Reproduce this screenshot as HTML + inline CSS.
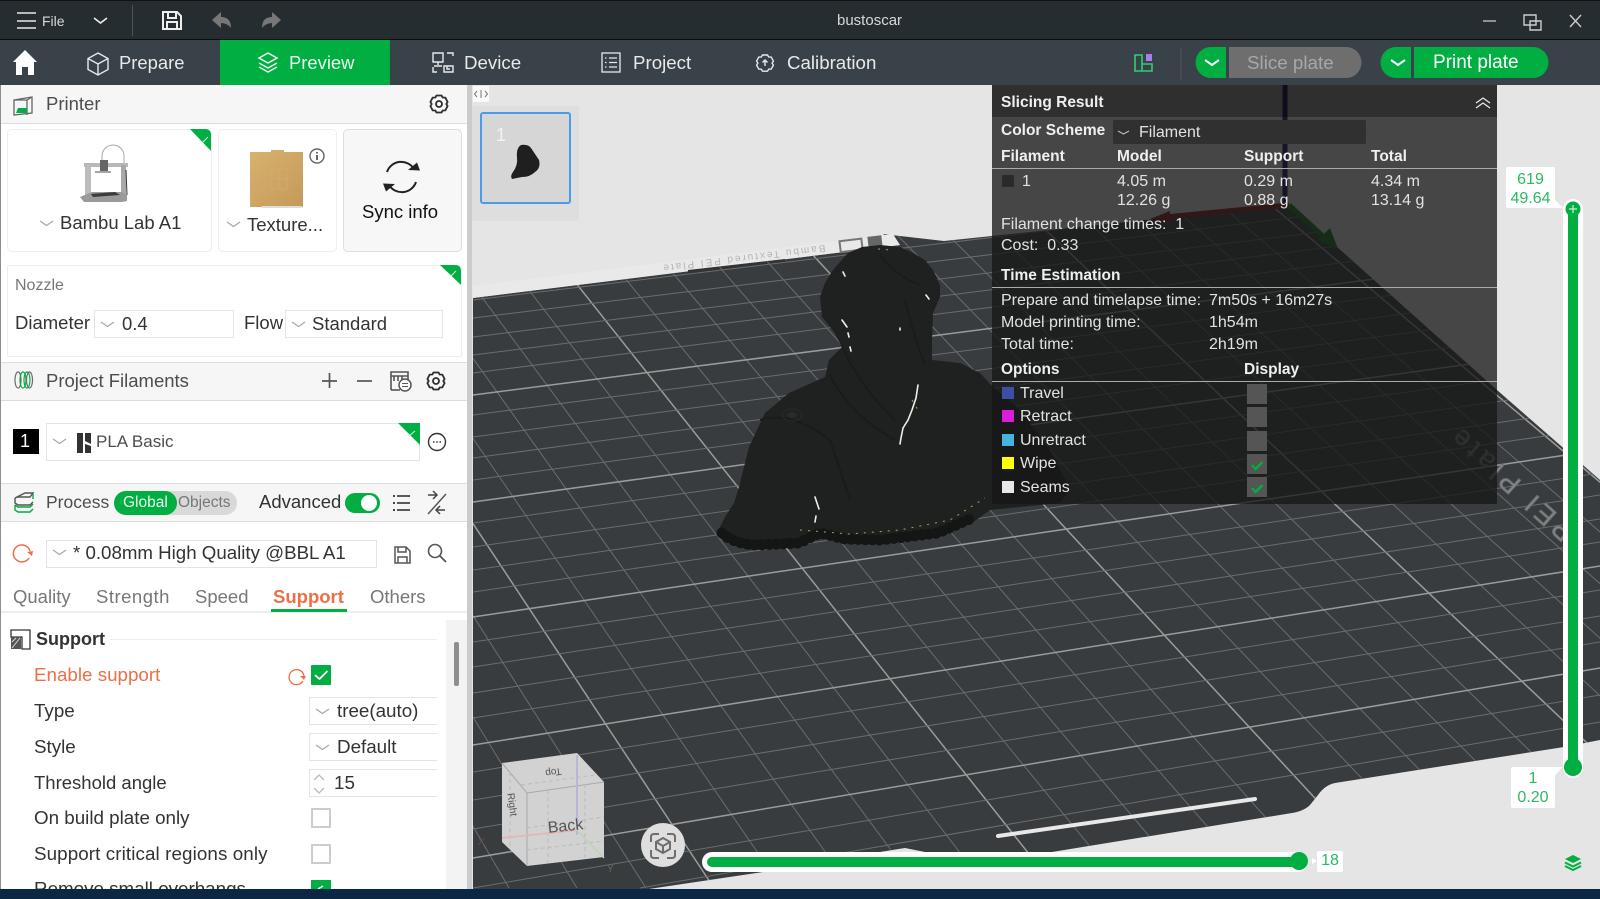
<!DOCTYPE html>
<html><head><meta charset="utf-8"><title>bustoscar</title>
<style>
html,body{margin:0;padding:0;width:1600px;height:899px;overflow:hidden;background:#e5e5e5;font-family:"Liberation Sans",sans-serif}
div{box-sizing:border-box}
.a{position:absolute}
.t{position:absolute;white-space:nowrap;line-height:22px;height:22px;margin-top:-11px}
.tab{color:#e8eaea;font-size:18.7px}
.l{color:#333;font-size:18.8px}
.g{color:#4d4d4d;font-size:18.5px}
.p{color:#e2e2e2;font-size:16px}
.b{color:#efefef;font-size:15.5px;font-weight:bold}
.sel{position:absolute;background:#fff;border:1px solid #e4e4e4}
.card{position:absolute;background:#fff;border:1px solid #eee;border-radius:5px}
.hd{position:absolute;left:1px;width:466px;background:#f6f6f6;border-top:1px solid #ddd;border-bottom:1px solid #ddd}
.sw{position:absolute;width:12px;height:12px;left:1002px}
.cb{position:absolute;left:1247px;width:20px;height:20px;background:#555}
.chk{position:absolute;left:311px;width:20px;height:20px;background:#fff;border:2px solid #ccc;border-radius:1px}
</style></head><body>

<!-- title and tab bars -->
<div class="a" style="left:0;top:0;width:1600px;height:40px;background:#262d30;border-top:1px solid #111;border-bottom:1px solid #0d0d0d"></div>
<div class="a" style="left:0;top:40px;width:1600px;height:45px;background:#384248"></div>
<div class="a" style="left:220px;top:40px;width:170px;height:45px;background:#00ae42"></div>

<!-- viewport -->
<svg class="a" style="left:0;top:0" width="1600" height="889" viewBox="0 0 1600 889">
<defs>
<clipPath id="pl"><path d="M473 298L900 245L883 234L944 241L1290 205L1383 288L1497 390L1600 480V740L1564 747L1335 783Q1325 785 1318 795L1310 805Q1304 811 1292 813L1052 852L930 853L905 848L880 852L763 872L649 889H473Z"/></clipPath>
</defs>
<rect x="472" y="85" width="1128" height="804" fill="#e5e5e5"/>
<path d="M473 298L900 245L883 234L944 241L1290 205L1383 288L1497 390L1600 480V740L1564 747L1335 783Q1325 785 1318 795L1310 805Q1304 811 1292 813L1052 852L930 853L905 848L880 852L763 872L649 889H473Z" fill="#393c3e"/>
<path d="M473 286L893 234L900 245L473 298Z" fill="#e9e9e9"/>
<path d="M688 270L785 259V263L688 274Z" fill="#333"/>
<text transform="translate(825,245) rotate(173)" font-size="10" fill="#b4b4b4" font-family="Liberation Sans,sans-serif" letter-spacing="2">Bambu Textured PEI Plate</text>
<rect x="840" y="240" width="22" height="11" fill="none" stroke="#777" stroke-width="2" transform="rotate(-7 850 245)"/>
<rect x="868" y="236" width="14" height="12" fill="#666" transform="rotate(-7 875 242)"/>
<g clip-path="url(#pl)" stroke="#6a6d6e" stroke-width="1">
<line x1="108" y1="200" x2="509" y2="888"/><line x1="158.5" y1="200" x2="577" y2="888"/><line x1="209" y1="200" x2="646" y2="888"/><line x1="259" y1="200" x2="714" y2="888" stroke="#9a9c9c" stroke-width="1.5"/><line x1="309" y1="200" x2="782" y2="888"/><line x1="360" y1="200" x2="851" y2="888"/><line x1="410" y1="200" x2="919" y2="888"/><line x1="460" y1="200" x2="987" y2="888"/><line x1="510" y1="200" x2="1056" y2="888" stroke="#9a9c9c" stroke-width="1.5"/><line x1="561" y1="200" x2="1124" y2="888"/><line x1="611" y1="200" x2="1193" y2="888"/><line x1="661" y1="200" x2="1261" y2="888"/><line x1="712" y1="200" x2="1329" y2="888"/><line x1="762" y1="200" x2="1398" y2="888" stroke="#9a9c9c" stroke-width="1.5"/><line x1="812" y1="200" x2="1466" y2="888"/><line x1="863" y1="200" x2="1535" y2="888"/><line x1="913" y1="200" x2="1603" y2="888"/><line x1="963" y1="200" x2="1671" y2="888"/><line x1="1014" y1="200" x2="1740" y2="888" stroke="#9a9c9c" stroke-width="1.5"/><line x1="1064" y1="200" x2="1808" y2="888"/><line x1="1114" y1="200" x2="1877" y2="888"/><line x1="1165" y1="200" x2="1945" y2="888"/><line x1="1215" y1="200" x2="2013" y2="888"/><line x1="1265" y1="200" x2="2082" y2="888" stroke="#9a9c9c" stroke-width="1.5"/>
<line x1="-244" y1="200" x2="30" y2="888"/><line x1="-194" y1="200" x2="98" y2="888"/><line x1="-143" y1="200" x2="167" y2="888"/><line x1="-93" y1="200" x2="235" y2="888"/><line x1="-43" y1="200" x2="303" y2="888"/><line x1="8" y1="200" x2="372" y2="888"/><line x1="58" y1="200" x2="440" y2="888"/>
<line x1="473" y1="300" x2="1600" y2="164"/><line x1="473" y1="318" x2="1600" y2="180"/><line x1="473" y1="337" x2="1600" y2="197"/><line x1="473" y1="355" x2="1600" y2="213"/><line x1="473" y1="373" x2="1600" y2="230"/><line x1="473" y1="395" x2="1600" y2="250" stroke="#9a9c9c" stroke-width="1.5"/><line x1="473" y1="415" x2="1600" y2="268"/><line x1="473" y1="437" x2="1600" y2="288"/><line x1="473" y1="458" x2="1600" y2="307"/><line x1="473" y1="480" x2="1600" y2="327"/><line x1="473" y1="502" x2="1600" y2="346" stroke="#9a9c9c" stroke-width="1.5"/><line x1="473" y1="523" x2="1600" y2="365"/><line x1="473" y1="547" x2="1600" y2="387"/><line x1="473" y1="570" x2="1600" y2="408"/><line x1="473" y1="592" x2="1600" y2="428"/><line x1="473" y1="617" x2="1600" y2="450" stroke="#9a9c9c" stroke-width="1.5"/><line x1="473" y1="642" x2="1600" y2="473"/><line x1="473" y1="667" x2="1600" y2="495"/><line x1="473" y1="693" x2="1600" y2="519"/><line x1="473" y1="718" x2="1600" y2="542"/><line x1="473" y1="745" x2="1600" y2="566" stroke="#9a9c9c" stroke-width="1.5"/><line x1="473" y1="772" x2="1600" y2="590"/><line x1="473" y1="800" x2="1600" y2="616"/><line x1="473" y1="829" x2="1600" y2="642"/><line x1="473" y1="858" x2="1600" y2="668" stroke="#9a9c9c" stroke-width="1.5"/><line x1="473" y1="888" x2="1600" y2="695"/><line x1="640" y1="888" x2="1600" y2="722"/>
<text transform="translate(1458,424) rotate(222)" font-size="27" fill="#85878a" font-family="Liberation Sans,sans-serif" text-anchor="end" letter-spacing="5">PEI Plate</text>
</g>
<path d="M998 836L1255 799" stroke="#e8e8e8" stroke-width="4" stroke-linecap="round"/>
<!-- axes -->
<path d="M1285 85V205" stroke="#12125e" stroke-width="5"/>
<path d="M1289 205L1165 217" stroke="#8c1a1a" stroke-width="5"/><path d="M1170 211L1150 219L1170 223Z" fill="#8c1a1a"/>
<path d="M1289 205L1325 238" stroke="#157a20" stroke-width="5"/><path d="M1318 240L1330 228L1338 249Z" fill="#157a20"/>
<!-- bust -->
<path d="M848 253L862 247L880 245L900 247L913 253L925 260L933 270L940 285L940 297L933 313L932 340L932 360L960 363L980 373L993 387L1020 410L1050 450L1070 490L1060 503L990 510L972 523L939 537L879 543L845 542L819 537L799 547L759 548L733 545L717 533L725 517L734 503L739 487L749 447L765 413L789 393L825 377L829 360L842 347L834 332L822 317L820 297L825 283L833 270Z" fill="#1f2020"/>
<path d="M722 533Q735 545 760 545L799 543L820 533L845 539L880 540L938 533L972 518" fill="none" stroke="#161717" stroke-width="8" stroke-linejoin="round"/>
<path d="M722 533Q735 545 760 545L799 543L820 533L845 539L880 540L938 533L972 518" fill="none" stroke="#141515" stroke-width="11" stroke-dasharray="0.1 7" stroke-linecap="round"/>
<path d="M842 345Q858 385 895 420M905 300Q915 340 925 365M880 255Q895 275 920 285M830 375Q850 415 895 440M760 420Q790 410 830 440L850 500" stroke="#1a1b1b" stroke-width="2" fill="none"/>
<ellipse cx="792" cy="415" rx="10" ry="6" fill="none" stroke="#292a2a"/><ellipse cx="792" cy="415" rx="5" ry="3" fill="#292a2a"/>
<g stroke="#eee" stroke-width="1.600" fill="none" stroke-linecap="round">
<path d="M842 320L847 327M848 333L849 337M850 347L851 351M843 272L845 276M926 295L929 299M900 328L900 330"/>
<path d="M918 385L916 398L912 410L908 420L903 428L901 438L900 444"/>
<path d="M815 497L819 509M816 516L815 522"/>
</g>
<g stroke="#a8a54a" stroke-width="1" stroke-dasharray="2 6" fill="none"><path d="M878 249L892 250"/><path d="M800 530L850 534L900 530L950 520L985 498"/><path d="M912 400L918 410"/></g>
<!-- thumbnails -->
<rect x="472" y="106" width="107" height="115" fill="#dedede" rx="2"/>
<rect x="481" y="113" width="89" height="90" fill="#d6d6d6" stroke="#4a9be8" stroke-width="2" rx="2"/>
<path d="M521 145Q528 144 531 148L539 160Q541 168 535 172Q530 177 522 177L512 179Q510 176 513 172Q518 165 517 158Q516 148 521 145Z" fill="#1f1f1f"/>
<rect x="473" y="86" width="16" height="16" fill="#fafafa"/>
<path d="M477 91l-2.500 3 2.500 3M485 91l2.500 3-2.500 3" stroke="#777" fill="none"/><path d="M481 90v8" stroke="#777"/>
<!-- nav cube -->
<path d="M502 763L577 753L604 782V857L527 866L502 842Z" fill="#d2d2d2"/>
<path d="M502 763L527 793L604 782M527 793V866" stroke="#a8a8a8" fill="none"/>
<path d="M521 785L595 775M510 772V848M527 828L604 817M527 850L604 841M548 790V862M585 784V858" stroke="#bbb" stroke-dasharray="4 3" fill="none"/>
<path d="M577 755V835" stroke="#b6b8d6" stroke-width="2"/>
<path d="M577 830L502 838" stroke="#e2b8b8" stroke-width="2"/>
<path d="M577 830L604 858" stroke="#b8d6b8" stroke-width="1.500"/>
<text transform="translate(566,831) rotate(-6)" font-size="16" fill="#555" font-family="Liberation Sans,sans-serif" text-anchor="middle">Back</text>
<text transform="translate(553,769) rotate(172)" font-size="10" fill="#555" font-family="Liberation Sans,sans-serif" text-anchor="middle">Top</text>
<text transform="translate(509,805) rotate(82)" font-size="10" fill="#555" font-family="Liberation Sans,sans-serif" text-anchor="middle">Right</text>
<text x="478" y="845" font-size="10" fill="#6b4b4b" font-family="Liberation Sans,sans-serif">X</text>
<text x="607" y="872" font-size="10" fill="#56705a" font-family="Liberation Sans,sans-serif">Y</text>
<circle cx="663" cy="845" r="22" fill="#dedede"/>
<g stroke="#6e6e6e" stroke-width="2" fill="none"><path d="M651 842v-5q0-3 3-3h5M667 834h5q3 0 3 3v5M675 850v5q0 3-3 3h-5M659 858h-5q-3 0-3-3v-5"/><path d="M663 838l7 4v7l-7 4-7-4v-7zM656 842l7 4 7-4M663 846v7"/></g>
<!-- horizontal slider -->
<rect x="702" y="852" width="606" height="20" rx="10" fill="#fff"/>
<rect x="707" y="857" width="592" height="10" rx="5" fill="#00ae42"/>
<circle cx="1299" cy="861" r="9" fill="#00ae42"/>
<path d="M1317 861l-5-3v6z" fill="#fff"/><rect x="1317" y="851" width="26" height="21" rx="2" fill="#fff"/>
<!-- vertical slider -->
<rect x="1563" y="199" width="20" height="579" rx="10" fill="#fff"/>
<rect x="1568" y="209" width="10" height="558" fill="#00ae42"/>
<circle cx="1573" cy="209" r="7.500" fill="#00ae42"/>
<path d="M1569 209h8M1573 205v8" stroke="#cfeeda" stroke-width="1.200"/>
<circle cx="1573" cy="767" r="9" fill="#00ae42"/>
<path d="M1555 200v8h8z" fill="#fff"/>
<rect x="1506" y="167" width="49" height="41" rx="2" fill="#fff"/>
<rect x="1511" y="767" width="44" height="41" rx="2" fill="#fff"/><path d="M1555 767h8l-8 8z" fill="#fff"/>
<path d="M1573 855l8 4-8 4-8-4z" fill="#00ae42"/><path d="M1565 862.500l8 4 8-4M1565 866l8 4 8-4" fill="none" stroke="#00ae42" stroke-width="2"/>
</svg>

<!-- bottom wallpaper -->
<div class="a" style="left:0;top:889px;width:1600px;height:10px;background:#0b2744"></div>

<!-- slicing panel -->
<div class="a" style="left:992px;top:85px;width:505px;height:419px;background:rgba(22,22,22,.77)"></div>
<div class="a" style="left:992px;top:85px;width:505px;height:32px;background:rgba(0,0,0,.32)"></div>
<div class="a" style="left:1113px;top:120px;width:253px;height:24px;background:#303030;border-radius:2px"></div>
<div class="a" style="left:992px;top:168px;width:505px;height:1px;background:#aaa"></div>
<div class="a" style="left:992px;top:287px;width:505px;height:1px;background:#aaa"></div>
<div class="a" style="left:992px;top:381px;width:505px;height:1px;background:#aaa"></div>
<div class="sw" style="top:175px;background:#2a2a2a"></div>
<div class="sw" style="top:387px;background:#3b4fa8"></div>
<div class="sw" style="top:410px;background:#d81fd8"></div>
<div class="sw" style="top:434px;background:#46b4dc"></div>
<div class="sw" style="top:457px;background:#ffff00"></div>
<div class="sw" style="top:481px;background:#e8e8e8"></div>
<div class="cb" style="top:384px"></div><div class="cb" style="top:407px"></div><div class="cb" style="top:431px"></div><div class="cb" style="top:454px"></div><div class="cb" style="top:477px"></div>

<!-- left panel -->
<div class="a" style="left:0;top:85px;width:467px;height:804px;background:#fff;border-left:1px solid #8a8f92"></div>
<div class="a" style="left:467px;top:85px;width:5px;height:804px;background:#cbcbcb"></div>
<div class="a" style="left:1px;top:85px;width:466px;height:39px;background:#f6f6f6;border-bottom:1px solid #ddd"></div>
<div class="card" style="left:7px;top:129px;width:205px;height:123px"></div>
<div class="card" style="left:218px;top:129px;width:119px;height:123px"></div>
<div class="card" style="left:343px;top:129px;width:119px;height:123px;background:#f7f7f7;border-color:#ddd"></div>
<div class="card" style="left:7px;top:265px;width:455px;height:92px;border-radius:2px"></div>
<div class="sel" style="left:94px;top:310px;width:140px;height:28px"></div>
<div class="sel" style="left:285px;top:310px;width:158px;height:28px"></div>
<div class="hd" style="top:362px;height:39px"></div>
<div class="a" style="left:13px;top:429px;width:26px;height:25px;background:#000"></div>
<div class="sel" style="left:46px;top:423px;width:374px;height:38px"></div>
<div class="hd" style="top:483px;height:39px"></div>
<div class="a" style="left:114px;top:491px;width:123px;height:24px;background:#d9d9d9;border-radius:12px"></div>
<div class="a" style="left:114px;top:491px;width:63px;height:24px;background:#00ae42;border-radius:12px"></div>
<div class="a" style="left:345px;top:493px;width:35px;height:20px;background:#00ae42;border-radius:10px"></div>
<div class="a" style="left:361px;top:495px;width:16px;height:16px;background:#fff;border-radius:50%"></div>
<div class="sel" style="left:46px;top:540px;width:331px;height:28px"></div>
<div class="a" style="left:1px;top:611px;width:466px;height:2px;background:#eee"></div>
<div class="a" style="left:271px;top:609px;width:76px;height:3px;background:#00ae42"></div>
<div class="a" style="left:446px;top:620px;width:21px;height:269px;background:#f3f3f3"></div>
<div class="a" style="left:454px;top:642px;width:5px;height:44px;background:#8e8e8e;border-radius:2px"></div>
<div class="a" style="left:110px;top:639px;width:327px;height:1px;background:#eee"></div>
<div class="a" style="left:309px;top:697px;width:128px;height:28px;background:#fff;border:1px solid #e4e4e4;border-right:none"></div>
<div class="a" style="left:309px;top:733px;width:128px;height:28px;background:#fff;border:1px solid #e4e4e4;border-right:none"></div>
<div class="a" style="left:309px;top:769px;width:128px;height:28px;background:#fff;border:1px solid #e4e4e4;border-right:none"></div>
<div class="chk" style="top:808px"></div>
<div class="chk" style="top:844px"></div>

<!-- icons -->
<svg class="a" style="left:0;top:0" width="1600" height="889" viewBox="0 0 1600 889">
<defs>
<path id="ch" d="M0 0l6.500 4.500 6.500-4.500" fill="none" stroke="#a8a8a8" stroke-width="1.300"/>
<g id="gear" fill="none" stroke="#2e2e2e" stroke-width="1.800" stroke-linejoin="round"><path d="M-2.500-8.500h5l1.200 2 2.600.1 2.300 4.400-1.300 2 1.300 2-2.300 4.400-2.600.1-1.200 2h-5l-1.200-2-2.600-.1-2.300-4.400 1.300-2-1.300-2 2.300-4.400 2.600-.1z"/><circle r="3"/></g>
</defs>
<!-- title bar -->
<path d="M17 13h19M17 21h19M17 28h19" stroke="#e8e8e8" stroke-width="1.600"/>
<path d="M94 18l6.500 5 6.500-5" fill="none" stroke="#eee" stroke-width="1.600"/>
<path d="M132.500 5v31" stroke="#4a5255"/>
<path d="M163 12h14l4 4v13h-18zM168 12v6h8v-6M167 29v-7h10v7" fill="none" stroke="#eee" stroke-width="2"/>
<path d="M212 20l9-8v5q10 0 10 11q-4-5-10-5v5z" fill="#777"/>
<path d="M281 20l-9-8v5q-10 0-10 11q4-5 10-5v5z" fill="#777"/>
<path d="M1483 21h13" stroke="#bbb" stroke-width="1.400"/>
<path d="M1524 15h12v10h-12zM1530 21h11v9h-11z" fill="none" stroke="#ccc" stroke-width="1.400"/>
<path d="M1570 15l11 12M1581 15l-11 12" stroke="#ccc" stroke-width="1.400"/>
<!-- tab bar -->
<path d="M25 50L37 62h-3v13h-6v-8h-6v8h-6V62h-3z" fill="#fff"/>
<path d="M98 53l10 5.500v11l-10 5.500-10-5.500v-11zM88 58.500l10 5.500 10-5.500M98 64v11" fill="none" stroke="#e8eaea" stroke-width="1.400"/>
<g fill="none" stroke="#e8f8ee" stroke-width="1.500"><path d="M268 53l9 5-9 5-9-5zM259 63l9 5 9-5M259 67l9 5 9-5"/></g>
<g fill="none" stroke="#e8eaea" stroke-width="1.400"><path d="M433 53h10v9h-10zM438 62v3M434 66h8M447 53h6v3M433 67v5h4M444 72h9v-6h-9zM447 66v3h3"/></g>
<g fill="none" stroke="#e8eaea" stroke-width="1.300"><rect x="602" y="53" width="18" height="19"/><path d="M605 58h1.500M609 58h8M605 62.500h1.500M609 62.500h8M605 67h1.500M609 67h8"/></g>
<g transform="translate(765,63)"><path d="M-2.500-8h5l1.200 2 2.500.1 2.200 4-1.300 2 1.300 2-2.200 4-2.500.1-1.200 2h-5l-1.200-2-2.500-.1-2.200-4 1.300-2-1.300-2 2.200-4 2.500-.1z" fill="none" stroke="#e8eaea" stroke-width="1.400"/><path d="M0 3v-6M-2.500-.5L0-3 2.500-.5" stroke="#e8eaea" stroke-width="1.400" fill="none"/></g>
<path d="M1135 55h7v16h-7zM1142 64h10v7h-10z" fill="none" stroke="#2fcf72" stroke-width="1.600"/>
<rect x="1146" y="54" width="6" height="7" fill="#a97fe8"/>
<path d="M1181 48v32" stroke="#4d575c"/>
<path d="M1226 47h-15a15.500 15.500 0 0 0 0 31h15z" fill="#00ae42"/>
<path d="M1229 47h117a15.500 15.500 0 0 1 0 31h-117z" fill="#6e6e6e"/>
<path d="M1205 60l7 5 7-5" fill="none" stroke="#fff" stroke-width="2"/>
<path d="M1411 47h-15a15.500 15.500 0 0 0 0 31h15z" fill="#00ae42"/>
<path d="M1414 47h119a15.500 15.500 0 0 1 0 31h-119z" fill="#00ae42"/>
<path d="M1391 60l7 5 7-5" fill="none" stroke="#fff" stroke-width="2"/>
<!-- panel icons -->
<path d="M1476 103l7-5 7 5M1476 108l7-5 7 5" fill="none" stroke="#e8e8e8" stroke-width="1.300"/>
<path d="M1118 131l5.500 3 5.500-3" fill="none" stroke="#bbb" stroke-width="1.200"/>
<path d="M1252 465l3.500 4 7-7M1252 488l3.500 4 7-7" fill="none" stroke="#00ae42" stroke-width="2.400"/>
<!-- printer header -->
<path d="M14 100l18-3v16l-18 2zM14 100h3M32 97l-5 3H14M27 100v15" fill="none" stroke="#666" stroke-width="1.300"/>
<path d="M16 113l2-5h9v5z" fill="#00ae42"/>
<use href="#gear" x="439" y="104"/>
<path d="M190 129h15q6 0 6 6v16z" fill="#00ae42"/><path d="M199 140l3 3 6-6" stroke="#d6f5e0" fill="none"/>
<!-- printer -->
<path d="M102 164v-8a11 11 0 0 1 22 0v8" fill="none" stroke="#a8a8a8" stroke-width="1"/>
<rect x="84" y="163" width="44" height="4" fill="#b8b8b8"/>
<rect x="85" y="165" width="6" height="33" fill="#bcbcbc"/>
<rect x="121" y="165" width="5" height="30" fill="#a8a8a8"/>
<path d="M126 170l1 25" stroke="#333" stroke-width="1"/>
<rect x="100" y="160" width="8" height="12" fill="#666"/>
<rect x="95" y="171" width="16" height="2" fill="#a5a5a5"/>
<path d="M80 197l12-5h30l5 3v6l-5 1H84z" fill="#9a9a9a"/>
<path d="M91 194l24-2 5 3-27 2z" fill="#3c3c3c"/>
<use href="#ch" x="40" y="221"/>
<!-- plate -->
<defs><linearGradient id="gold" x1="0" y1="0" x2="1" y2="1"><stop offset="0" stop-color="#d9b26e"/><stop offset="1" stop-color="#c49a58"/></linearGradient></defs>
<path d="M250 152h21v-2h13v2h19v55h-53z" fill="url(#gold)"/>
<path d="M271 169h8v10h-8zM279 169h8v10h-8zM271 179h8v10h-8zM279 179h8v10h-8z" fill="none" stroke="#d2ab6b"/>
<rect x="262" y="206" width="40" height="2" fill="#ddd"/>
<circle cx="317" cy="156" r="7" fill="none" stroke="#666" stroke-width="1.400"/><path d="M317 155v5M317 152v1.500" stroke="#555" stroke-width="1.800"/>
<use href="#ch" x="227" y="222"/>
<!-- sync -->
<path d="M387 172a15 15 0 0 1 27-3M416 182a15 15 0 0 1-27 3" fill="none" stroke="#222" stroke-width="2"/>
<path d="M408 170l12 .5-3-8zM395 184l-12-.5 3 8z" fill="#222"/>
<!-- nozzle -->
<path d="M440 265h15q6 0 6 6v14z" fill="#00ae42"/><path d="M449 274l2 2 5-5" stroke="#d6f5e0" fill="none"/>
<use href="#ch" x="101" y="322"/><use href="#ch" x="292" y="322"/>
<!-- filaments -->
<g fill="none" stroke="#6b6b6b" stroke-width="1.200"><ellipse cx="18" cy="380" rx="3" ry="8"/></g>
<g fill="none" stroke="#00ae42" stroke-width="1.200"><ellipse cx="23" cy="380" rx="3" ry="8"/><ellipse cx="27" cy="380" rx="3" ry="8"/></g>
<g fill="none" stroke="#6b6b6b" stroke-width="1.200"><ellipse cx="29.500" cy="380" rx="3" ry="8"/></g>
<path d="M322 381h15M329.500 373v15" stroke="#555" stroke-width="1.700"/>
<path d="M357 381h15" stroke="#555" stroke-width="1.700"/>
<path d="M391 390v-18h17v9M391 376h17M394 376v5M398 376v5M402 376v5" fill="none" stroke="#555" stroke-width="1.600"/><path d="M391 390h9" stroke="#555" stroke-width="1.600"/>
<circle cx="405" cy="385" r="6" fill="#fff" stroke="#555" stroke-width="1.500"/><path d="M402 383.500h6M402 386.500h6" stroke="#555"/>
<use href="#gear" x="436" y="381"/>
<path d="M398 423h22v22z" fill="#00ae42"/><path d="M407 434l2 2 6-5" stroke="#d6f5e0" fill="none"/>
<use href="#ch" x="53" y="439"/>
<path d="M77 433h6v9l-6 3zM77 445l6-3v11h-6zM85 433h6v11l-6-3zM85 444l6 2v7h-6z" fill="#333"/>
<circle cx="437" cy="442" r="8.500" fill="none" stroke="#333" stroke-width="1.400"/><path d="M433 442h1.500M436.300 442h1.500M439.500 442h1.500" stroke="#333" stroke-width="1.400"/>
<!-- process -->
<path d="M15 498l10-5h8l-3 4H18z M15 498v5l3 2h12l3-3" fill="none" stroke="#555" stroke-width="1.400"/>
<path d="M15 505v5l3 2h12l3-3M15 505l3 2h12l3-3M33 494v5" fill="none" stroke="#00ae42" stroke-width="1.400"/>
<path d="M397 496h13M397 503h13M397 510h13" stroke="#444" stroke-width="1.700"/><path d="M393 496h2M393 503h2M393 510h2" stroke="#444" stroke-width="2"/>
<path d="M446 494l-18 20" stroke="#555" stroke-width="1.500"/>
<path d="M428 495h9M433 491l4 4-4 4" fill="none" stroke="#444" stroke-width="1.500"/>
<path d="M445 510h-9M440 506l-4 4 4 4" fill="none" stroke="#444" stroke-width="1.500"/>
<!-- preset -->
<path d="M30 551a8.500 8.500 0 1 0-1 7" fill="none" stroke="#ed6f45" stroke-width="1.500"/><path d="M27 552l6-1-1 5z" fill="#ed6f45"/>
<use href="#ch" x="53" y="550"/>
<path d="M395 547h11l4 4v12h-15zM398 547v5h8v-5M398 563v-6h9v6" fill="none" stroke="#555" stroke-width="1.500"/>
<circle cx="435" cy="551" r="6.500" fill="none" stroke="#555" stroke-width="1.600"/><path d="M440 556l6 6" stroke="#555" stroke-width="1.800"/>
<!-- support section -->
<path d="M11 630h19v19h-8V637H11z" fill="none" stroke="#333" stroke-width="1.300"/>
<path d="M11 637h10v12h-10z" fill="#555"/><path d="M12 648l8-10M12 642l4-4" stroke="#ddd"/>
<path d="M304 676a7.500 7.500 0 1 0-1 5" fill="none" stroke="#ed6f45" stroke-width="1.300"/><path d="M300 676l6 0-2 4z" fill="#ed6f45"/>
<rect x="311" y="665" width="20" height="20" rx="1" fill="#00ae42"/>
<path d="M315 675l4.500 4 8-8" fill="none" stroke="#fff" stroke-width="1.800"/>
<use href="#ch" x="316" y="709"/><use href="#ch" x="316" y="745"/>
<path d="M314 780l5-5 5 5M314 788l5 5 5-5" fill="none" stroke="#bbb" stroke-width="1.300"/>
<rect x="311" y="880" width="20" height="9" fill="#00ae42"/><path d="M318 889l5-3" stroke="#fff" stroke-width="1.500"/>
</svg>

<!-- clipped bottom row -->
<div class="a" style="left:34px;top:878px;width:240px;height:11px;overflow:hidden"><div style="position:absolute;left:0;top:1px;height:20px;white-space:nowrap;line-height:20px;font-size:18.800px;color:#333">Remove small overhangs</div></div>

<!-- title text -->
<div class="t" style="left:42px;top:21px;color:#d8d8d8;font-size:14px">File</div>
<div class="t" style="left:837px;top:21px;color:#d8d8d8;font-size:15px">bustoscar</div>
<!-- tabs -->
<div class="t tab" style="left:119px;top:63px;font-size:18.400px">Prepare</div>
<div class="t tab" style="left:289px;top:63px;color:#e8f8ee;font-size:18.400px">Preview</div>
<div class="t tab" style="left:464px;top:63px">Device</div>
<div class="t tab" style="left:633px;top:63px">Project</div>
<div class="t tab" style="left:787px;top:63px">Calibration</div>
<div class="t" style="left:1247px;top:63px;font-size:18.800px;color:#a8a8a8">Slice plate</div>
<div class="t" style="left:1433px;top:63px;font-size:19px;color:#fff">Print plate</div>

<!-- left text -->
<div class="t g" style="left:46px;top:104px">Printer</div>
<div class="t l" style="left:60px;top:223px;font-size:18.500px">Bambu Lab A1</div>
<div class="t l" style="left:247px;top:225px;font-size:18.500px">Texture...</div>
<div class="t" style="left:362px;top:212px;font-size:18.500px;color:#111">Sync info</div>
<div class="t" style="left:15px;top:286px;font-size:16px;color:#777">Nozzle</div>
<div class="t l" style="left:15px;top:323px;font-size:18.500px">Diameter</div>
<div class="t l" style="left:122px;top:324px;font-size:18.500px">0.4</div>
<div class="t l" style="left:244px;top:323px;font-size:18.500px">Flow</div>
<div class="t l" style="left:312px;top:324px;font-size:18.500px">Standard</div>
<div class="t g" style="left:46px;top:381px">Project Filaments</div>
<div class="t" style="left:20px;top:441px;font-size:18px;color:#fff">1</div>
<div class="t g" style="left:96px;top:442px;font-size:17px">PLA Basic</div>
<div class="t g" style="left:46px;top:502px;font-size:17.500px">Process</div>
<div class="t" style="left:123px;top:503px;font-size:15.500px;color:#e8f8ee">Global</div>
<div class="t" style="left:178px;top:503px;font-size:15.500px;color:#777">Objects</div>
<div class="t l" style="left:259px;top:502px;font-size:18.500px">Advanced</div>
<div class="t l" style="left:73px;top:553px;font-size:18.700px">* 0.08mm High Quality @BBL A1</div>
<div class="t" style="left:13px;top:597px;font-size:18.500px;color:#777">Quality</div>
<div class="t" style="left:96px;top:597px;font-size:18.500px;color:#777;letter-spacing:.5px">Strength</div>
<div class="t" style="left:195px;top:597px;font-size:18.500px;color:#777">Speed</div>
<div class="t" style="left:273px;top:597px;font-size:18.500px;color:#ed6f45;font-weight:bold">Support</div>
<div class="t" style="left:370px;top:597px;font-size:18.500px;color:#777">Others</div>
<div class="t" style="left:36px;top:639px;font-size:18px;color:#333;font-weight:bold">Support</div>
<div class="t" style="left:34px;top:675px;font-size:18.800px;color:#ed6f45">Enable support</div>
<div class="t l" style="left:34px;top:711px">Type</div>
<div class="t l" style="left:337px;top:711px">tree(auto)</div>
<div class="t l" style="left:34px;top:747px">Style</div>
<div class="t l" style="left:337px;top:747px">Default</div>
<div class="t l" style="left:34px;top:783px;font-size:18.500px">Threshold angle</div>
<div class="t l" style="left:334px;top:783px">15</div>
<div class="t l" style="left:34px;top:818px">On build plate only</div>
<div class="t l" style="left:34px;top:854px;letter-spacing:.1px">Support critical regions only</div>

<!-- panel text -->
<div class="t b" style="left:1001px;top:103px">Slicing Result</div>
<div class="t b" style="left:1001px;top:131px">Color Scheme</div>
<div class="t p" style="left:1139px;top:133px">Filament</div>
<div class="t b" style="left:1001px;top:157px">Filament</div>
<div class="t b" style="left:1117px;top:157px">Model</div>
<div class="t b" style="left:1244px;top:157px">Support</div>
<div class="t b" style="left:1371px;top:157px">Total</div>
<div class="t p" style="left:1022px;top:182px">1</div>
<div class="t p" style="left:1117px;top:182px">4.05 m</div>
<div class="t p" style="left:1117px;top:201px">12.26 g</div>
<div class="t p" style="left:1244px;top:182px">0.29 m</div>
<div class="t p" style="left:1244px;top:201px">0.88 g</div>
<div class="t p" style="left:1371px;top:182px">4.34 m</div>
<div class="t p" style="left:1371px;top:201px">13.14 g</div>
<div class="t p" style="left:1001px;top:225px">Filament change times:&nbsp; 1</div>
<div class="t p" style="left:1001px;top:246px">Cost:&nbsp; 0.33</div>
<div class="t b" style="left:1001px;top:276px">Time Estimation</div>
<div class="t p" style="left:1001px;top:301px">Prepare and timelapse time:</div>
<div class="t p" style="left:1209px;top:301px">7m50s + 16m27s</div>
<div class="t p" style="left:1001px;top:323px">Model printing time:</div>
<div class="t p" style="left:1209px;top:323px">1h54m</div>
<div class="t p" style="left:1001px;top:345px">Total time:</div>
<div class="t p" style="left:1209px;top:345px">2h19m</div>
<div class="t b" style="left:1001px;top:370px">Options</div>
<div class="t b" style="left:1244px;top:370px">Display</div>
<div class="t p" style="left:1020px;top:394px">Travel</div>
<div class="t p" style="left:1020px;top:417px">Retract</div>
<div class="t p" style="left:1020px;top:441px">Unretract</div>
<div class="t p" style="left:1020px;top:464px">Wipe</div>
<div class="t p" style="left:1020px;top:488px">Seams</div>

<!-- sliders text -->
<div class="t" style="left:1506px;width:49px;text-align:center;top:180px;color:#2bb865;font-size:16px">619</div>
<div class="t" style="left:1506px;width:49px;text-align:center;top:199px;color:#2bb865;font-size:16px">49.64</div>
<div class="t" style="left:1511px;width:44px;text-align:center;top:779px;color:#2bb865;font-size:16px">1</div>
<div class="t" style="left:1511px;width:44px;text-align:center;top:798px;color:#2bb865;font-size:16px">0.20</div>
<div class="t" style="left:1317px;width:26px;text-align:center;top:861px;color:#2bb865;font-size:16px">18</div>
<div class="t" style="left:496px;top:135px;color:#f4f4f4;font-size:18px">1</div>
</body></html>
